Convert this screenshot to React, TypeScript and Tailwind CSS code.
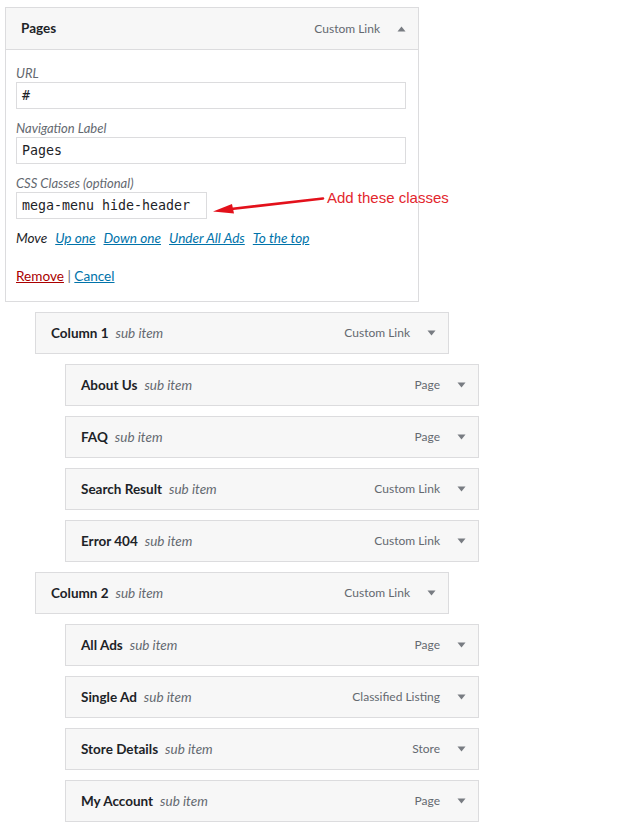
const font = { fontFamily: "Lato, 'Open Sans', sans-serif" };
const mono = { fontFamily: "'DejaVu Sans Mono', monospace" };

const Caret = ({ up = false }: { up?: boolean }) => (
  <svg width="9" height="6" viewBox="0 0 9 6" className="shrink-0">
    {up ? <path d="M0.5 5.5 L4.5 0.5 L8.5 5.5 Z" fill="#787c82" /> : <path d="M0.5 0.5 L4.5 5.5 L8.5 0.5 Z" fill="#787c82" />}
  </svg>
);

type Item = { title: string; type: string; depth: number };

const items: Item[] = [
  { title: "Column 1", type: "Custom Link", depth: 1 },
  { title: "About Us", type: "Page", depth: 2 },
  { title: "FAQ", type: "Page", depth: 2 },
  { title: "Search Result", type: "Custom Link", depth: 2 },
  { title: "Error 404", type: "Custom Link", depth: 2 },
  { title: "Column 2", type: "Custom Link", depth: 1 },
  { title: "All Ads", type: "Page", depth: 2 },
  { title: "Single Ad", type: "Classified Listing", depth: 2 },
  { title: "Store Details", type: "Store", depth: 2 },
  { title: "My Account", type: "Page", depth: 2 },
];

const MenuItem = ({ item }: { item: Item }) => (
  <div className={`mt-[10px] ${item.depth === 1 ? "ml-[30px]" : "ml-[60px]"}`}>
    <div className="w-[414px] h-[42px] border border-[#dcdcde] bg-[#f7f7f7] flex items-center pl-[15px] pr-[12px]">
      <span className="font-bold text-[13.5px] text-[#1d2327]">{item.title}</span>
      <span className="italic text-[13.5px] text-[#646970] ml-[7px]">sub item</span>
      <span className="ml-auto text-[12px] text-[#646970]">{item.type}</span>
      <span className="ml-[17px]">
        <Caret />
      </span>
    </div>
  </div>
);

const Label = ({ children }: { children: React.ReactNode }) => (
  <div className="italic text-[13px] leading-[18px] text-[#646970]">{children}</div>
);

const Input = ({ value, className = "w-full" }: { value: string; className?: string }) => (
  <div
    className={`h-[27px] shrink-0 border border-[#dcdcde] bg-white flex items-center px-[5px] text-[13.3px] text-[#1d2327] ${className}`}
    style={mono}
  >
    {value}
  </div>
);

export default function App() {
  return (
    <div className="bg-white min-h-[828px] pt-[7px] pl-[5px]" style={font}>
      <div className="w-[414px] border border-[#dcdcde] bg-white">
        <div className="h-[42px] border-b border-[#dcdcde] bg-[#f7f7f7] flex items-center pl-[15px] pr-[12px]">
          <span className="font-bold text-[13.5px] text-[#1d2327]">Pages</span>
          <span className="ml-auto text-[12px] text-[#646970]">Custom Link</span>
          <span className="ml-[17px]">
            <Caret up />
          </span>
        </div>
        <div className="pl-[10px] pr-[12px] pt-[14px] pb-[16px] flex flex-col gap-[10px]">
          <div>
            <Label>URL</Label>
            <Input value="#" />
          </div>
          <div>
            <Label>Navigation Label</Label>
            <Input value="Pages" />
          </div>
          <div>
            <Label>CSS Classes (optional)</Label>
            <div className="flex items-center">
              <Input value="mega-menu hide-header" className="w-[191px]" />
              <svg width="114" height="20" viewBox="0 0 114 20" className="shrink-0 ml-[4px]">
                <path d="M20 13 L112 2.5" stroke="#e3111b" strokeWidth="2.6" strokeLinecap="round" />
                <path d="M2 15.5 L21 8 L23 17.5 Z" fill="#e3111b" />
              </svg>
              <span
                className="ml-[2px] whitespace-nowrap text-[15px] text-[#e3262d] -mt-[14px]"
                style={{ fontFamily: "'Liberation Sans', Arial, sans-serif" }}
              >
                Add these classes
              </span>
            </div>
          </div>
          <div className="text-[13.6px] leading-[18px] italic text-[#1d2327] flex gap-[8px]">
            <span>Move</span>
            <a className="text-[#0073aa] underline">Up one</a>
            <a className="text-[#0073aa] underline">Down one</a>
            <a className="text-[#0073aa] underline">Under All Ads</a>
            <a className="text-[#0073aa] underline">To the top</a>
          </div>
          <div className="mt-[10px] text-[13.6px] leading-[18px] text-[#646970]">
            <a className="text-[#a00] underline">Remove</a> | <a className="text-[#0073aa] underline">Cancel</a>
          </div>
        </div>
      </div>
      {items.map((item) => (
        <MenuItem key={item.title} item={item} />
      ))}
    </div>
  );
}
